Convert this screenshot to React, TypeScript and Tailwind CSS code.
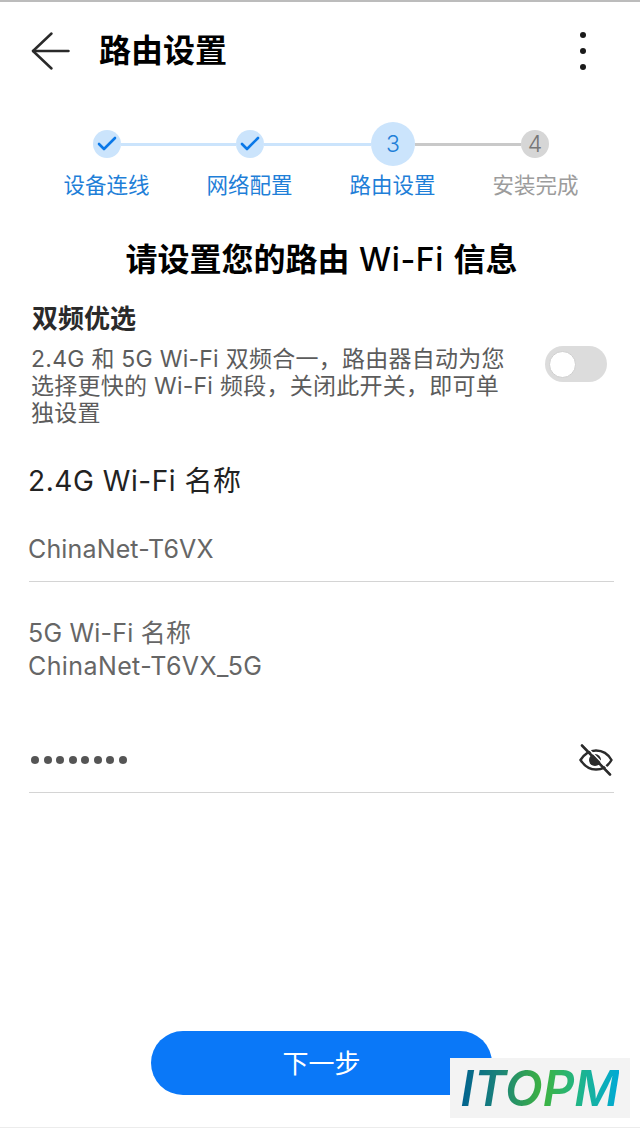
import { Check } from 'lucide-react';

const font = { fontFamily: 'Inter, "Noto Sans CJK SC", sans-serif' };

const labels = [
  { text: '设备连线', cls: 'text-[#1f7fd8]' },
  { text: '网络配置', cls: 'text-[#1f7fd8]' },
  { text: '路由设置', cls: 'text-[#1f7fd8]' },
  { text: '安装完成', cls: 'text-[#9c9c9c]' },
];

const Done = () => (
  <div className="flex h-7 w-7 shrink-0 items-center justify-center rounded-full bg-[#cbe4fc]">
    <Check className="h-6 w-6 text-[#0a78e8]" strokeWidth={2.6} />
  </div>
);

const Stepper = () => (
  <div>
    <div className="flex h-11 items-center pl-[93px]">
      <Done />
      <div className="h-[3px] w-[115px] bg-[#cbe4fc]" />
      <Done />
      <div className="h-[3px] w-[107px] bg-[#cbe4fc]" />
      <div className="flex h-11 w-11 shrink-0 items-center justify-center rounded-full bg-[#cbe4fc] text-[23px] font-light text-[#1f7fd8]">
        3
      </div>
      <div className="h-[3px] w-[106px] bg-[#c9c9c9]" />
      <div className="flex h-7 w-7 shrink-0 items-center justify-center rounded-full bg-[#d6d6d6] text-[23px] font-light text-[#777777]">
        4
      </div>
    </div>
    <div className="mt-[4px] grid grid-cols-[repeat(4,143px)] pl-[35px]">
      {labels.map((l) => (
        <div key={l.text} className={`text-center text-[21.5px] leading-[30px] ${l.cls}`}>
          {l.text}
        </div>
      ))}
    </div>
  </div>
);

const BackArrow = () => (
  <svg width="40" height="40" viewBox="0 0 40 40" fill="none" stroke="#2a2a2a" strokeWidth="2.5" strokeLinecap="round" strokeLinejoin="round">
    <path d="M38.5 20 H3" />
    <path d="M21.5 2.5 L3 20 L21.5 37.5" />
  </svg>
);

const EyeOff = () => (
  <svg width="36" height="34" viewBox="0 0 36 34" fill="none" stroke="#2b2b2b" strokeWidth="2.4" strokeLinecap="round">
    <path d="M2.5 17 C7 10 12 7.5 18 7.5 C24 7.5 29.5 10 33.5 17 C29.5 24 24 26.5 18 26.5 C12 26.5 7 24 2.5 17 Z" />
    <circle cx="17" cy="17" r="6" fill="#2b2b2b" stroke="none" />
    <path d="M4 2.5 L32 31.5" strokeWidth="2.6" />
    <path d="M6 1 L34 30" stroke="#ffffff" strokeWidth="1.4" />
  </svg>
);

const App = () => {
  return (
    <div className="relative flex h-[1128px] w-[640px] flex-col overflow-hidden border-t-2 border-b border-t-[#bcbcbc] border-b-[#ececec] bg-white" style={font}>
      {/* header */}
      <div className="mt-[29px] flex h-10 items-center pl-[30px] pr-[54px]">
        <BackArrow />
        <div className="ml-[29px] flex-1 text-[32px] font-bold leading-10 text-black">路由设置</div>
        <div className="flex flex-col gap-[10px]">
          <div className="h-1.5 w-1.5 rounded-full bg-[#1a1a1a]" />
          <div className="h-1.5 w-1.5 rounded-full bg-[#1a1a1a]" />
          <div className="h-1.5 w-1.5 rounded-full bg-[#1a1a1a]" />
        </div>
      </div>

      <div className="mt-[51px]">
        <Stepper />
      </div>

      <h1 className="mt-[40px] pl-[3px] text-center text-[32px] font-bold leading-10 text-black">
        请设置您的路由 <span className="mx-[2px] font-medium tracking-[0.6px]">Wi-Fi</span> 信息
      </h1>

      {/* dual band */}
      <div className="mt-[21px] px-[32px] text-[26px] font-bold leading-[36px] text-[#2a2a2a]">双频优选</div>
      <div className="mt-[9px] flex pl-[31px] pr-[33px]">
        <p className="w-[481px] text-[23px] leading-[27px] tracking-[0.25px] text-[#5c5c5c]">
          2.4G 和 5G Wi-Fi 双频合一，路由器自动为您选择更快的 Wi-Fi 频段，关闭此开关，即可单独设置
        </p>
        <div className="ml-auto flex h-9 w-[62px] items-center rounded-full bg-[#dcdcdc] pl-[4px]">
          <div className="h-[27px] w-[27px] rounded-full border border-[#cfcfcf] bg-white" />
        </div>
      </div>

      {/* fields */}
      <div className="flex-1 pl-[29px] pr-[26px]">
        <div className="-ml-px mt-[36px] text-[28px] leading-9 tracking-[0.55px] text-[#222222]">2.4G Wi-Fi 名称</div>
        <div className="mt-[32px] border-b border-[#d4d4d4] pb-[14px] text-[25px] leading-[36px] tracking-[0.15px] text-[#666666]">
          <span className="-ml-px">ChinaNet-T6VX</span>
        </div>
        <div className="-ml-px mt-[34px] text-[25px] leading-[34px] tracking-[0.2px] text-[#666666]">5G Wi-Fi 名称</div>
        <div className="-ml-px text-[25px] leading-[33px] tracking-[0.4px] text-[#666666]">ChinaNet-T6VX_5G</div>
        <div className="mt-[48px] flex h-[62px] items-center justify-between border-b border-[#d4d4d4] pb-[4px]">
          <div className="ml-[2px] flex gap-[4.5px]">
            {[0, 1, 2, 3, 4, 5, 6, 7].map((i) => (
              <div key={i} className="h-[8px] w-[8px] rounded-full bg-[#555555]" />
            ))}
          </div>
          <EyeOff />
        </div>
      </div>

      {/* next button */}
      <div className="mb-[32px] flex justify-center pl-[3px]">
        <button className="h-16 w-[341px] rounded-full bg-[#0a78f8] text-[26px] text-white">下一步</button>
      </div>

      {/* watermark */}
      <div className="absolute left-[450px] top-[1056px] flex h-[60px] w-[180px] items-center justify-center bg-[#f3f3f3]">
        <span
          className="bg-[linear-gradient(90deg,#00628f_0%,#1c8478_25%,#3eb340_52%,#1fb58a_75%,#00a9d6_100%)] bg-clip-text text-[49px] font-semibold italic leading-none text-transparent"
          style={{ fontFamily: 'Inter, sans-serif' }}
        >
          ITOPM
        </span>
      </div>
    </div>
  );
};

export default App;
